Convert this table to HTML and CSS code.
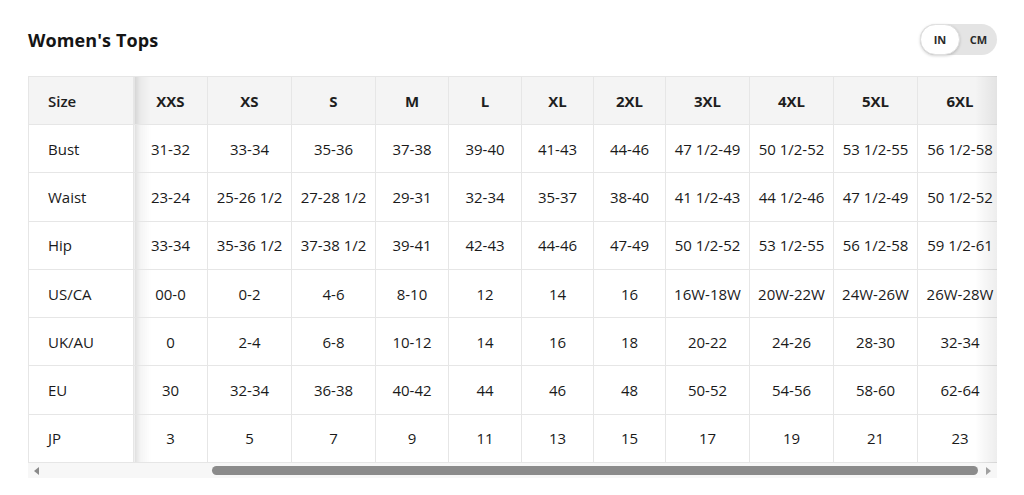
FILE: index.html
```html
<!DOCTYPE html>
<html lang="en">
<head>
<meta charset="utf-8">
<title>Women's Tops</title>
<link rel="stylesheet" href="styles.css">
</head>
<body>
<div class="page">
  <div class="top">
    <h2 class="title">Women's Tops</h2>
    <div class="toggle">
      <span class="opt active">IN</span>
      <span class="opt">CM</span>
    </div>
  </div>
  <div class="chart">
    <div class="scroller">
      <table class="sizes">
        <colgroup>
          <col class="c-first"><col class="c74"><col class="c84"><col class="c84"><col class="c73"><col class="c73"><col class="c72"><col class="c72"><col class="c84"><col class="c84"><col class="c84"><col class="c85">
        </colgroup>
        <thead>
          <tr><th class="first">Size</th><th class="shade">XXS</th><th>XS</th><th>S</th><th>M</th><th>L</th><th>XL</th><th>2XL</th><th>3XL</th><th>4XL</th><th>5XL</th><th>6XL</th></tr>
        </thead>
        <tbody>
          <tr><td class="first">Bust</td><td class="shade">31-32</td><td>33-34</td><td>35-36</td><td>37-38</td><td>39-40</td><td>41-43</td><td>44-46</td><td>47 1/2-49</td><td>50 1/2-52</td><td>53 1/2-55</td><td>56 1/2-58</td></tr>
          <tr><td class="first">Waist</td><td class="shade">23-24</td><td>25-26 1/2</td><td>27-28 1/2</td><td>29-31</td><td>32-34</td><td>35-37</td><td>38-40</td><td>41 1/2-43</td><td>44 1/2-46</td><td>47 1/2-49</td><td>50 1/2-52</td></tr>
          <tr><td class="first">Hip</td><td class="shade">33-34</td><td>35-36 1/2</td><td>37-38 1/2</td><td>39-41</td><td>42-43</td><td>44-46</td><td>47-49</td><td>50 1/2-52</td><td>53 1/2-55</td><td>56 1/2-58</td><td>59 1/2-61</td></tr>
          <tr><td class="first">US/CA</td><td class="shade">00-0</td><td>0-2</td><td>4-6</td><td>8-10</td><td>12</td><td>14</td><td>16</td><td>16W-18W</td><td>20W-22W</td><td>24W-26W</td><td>26W-28W</td></tr>
          <tr><td class="first">UK/AU</td><td class="shade">0</td><td>2-4</td><td>6-8</td><td>10-12</td><td>14</td><td>16</td><td>18</td><td>20-22</td><td>24-26</td><td>28-30</td><td>32-34</td></tr>
          <tr><td class="first">EU</td><td class="shade">30</td><td>32-34</td><td>36-38</td><td>40-42</td><td>44</td><td>46</td><td>48</td><td>50-52</td><td>54-56</td><td>58-60</td><td>62-64</td></tr>
          <tr><td class="first">JP</td><td class="shade">3</td><td>5</td><td>7</td><td>9</td><td>11</td><td>13</td><td>15</td><td>17</td><td>19</td><td>21</td><td>23</td></tr>
        </tbody>
      </table>
    </div>
    <div class="scrollbar">
      <span class="arrow left"></span>
      <div class="track"><div class="thumb"></div></div>
      <span class="arrow right"></span>
    </div>
  </div>
</div>
</body>
</html>
```
FILE: styles.css
```css
html, body {
  margin: 0;
  padding: 0;
  background: #ffffff;
}
body {
  font-family: "Open Sans", "Liberation Sans", sans-serif;
  color: #1e1e1e;
}
.page {
  width: 968px;
  padding: 23px 28px 0 28px;
}
.top {
  display: flex;
  align-items: center;
  justify-content: space-between;
  height: 33px;
  margin-bottom: 20px;
}
.title {
  margin: 0;
  font-size: 18px;
  font-weight: 700;
  letter-spacing: 0.1px;
  color: #151515;
}
.toggle {
  display: flex;
  align-items: center;
  width: 77px;
  height: 31px;
  box-sizing: border-box;
  border-radius: 16px;
  background: #e4e4e4;
  margin-right: -1px;
}
.opt {
  display: flex;
  align-items: center;
  justify-content: center;
  height: 31px;
  font-size: 11px;
  font-weight: 700;
  color: #2a2a2a;
}
.opt.active {
  width: 40px;
  background: #ffffff;
  border-radius: 16px;
  box-shadow: 0 1px 3px rgba(0,0,0,0.18);
  box-sizing: border-box;
  border: 1px solid #e0e0e0;
}
.opt:not(.active) {
  flex: 1;
}
.chart {
  position: relative;
  width: 969px;
}
.scroller {
  position: relative;
  width: 969px;
  overflow: hidden;
}
.scroller::after {
  content: "";
  position: absolute;
  top: 0;
  right: 0;
  bottom: 0;
  width: 22px;
  background: linear-gradient(to left, rgba(0,0,0,0.07), rgba(0,0,0,0));
}
.sizes {
  border-collapse: collapse;
  table-layout: fixed;
  width: 974px;
  font-size: 15px;
}
.c-first { width: 105px; }
.c72 { width: 72px; }
.c73 { width: 73px; }
.c74 { width: 74px; }
.c84 { width: 84px; }
.c85 { width: 85px; }
.sizes th, .sizes td {
  border: 1px solid #e6e6e6;
  height: 48.3px;
  padding: 0;
  text-align: center;
  white-space: nowrap;
  box-sizing: border-box;
}
.sizes thead th {
  background-color: #f4f4f4;
  font-weight: 700;
  height: 48px;
}
.sizes td {
  background-color: #ffffff;
  font-weight: 500;
  color: #1a1a1a;
}
.sizes .first {
  text-align: left;
  padding-left: 19px;
}
.sizes thead .first { font-weight: 600; }
.sizes .shade {
  background-image: linear-gradient(to right, rgba(0,0,0,0.13), rgba(0,0,0,0.04) 6px, rgba(0,0,0,0) 16px);
  border-left-color: #d8d8d8;
}
.scrollbar {
  display: flex;
  align-items: center;
  height: 15px;
  background: #f7f7f7;
  width: 969px;
  box-sizing: border-box;
  padding: 0 6px 0 6px;
}
.arrow {
  width: 0;
  height: 0;
  border-top: 4px solid transparent;
  border-bottom: 4px solid transparent;
}
.arrow.left { border-right: 5px solid #8a8a8a; }
.arrow.right { border-left: 5px solid #a0a0a0; }
.track {
  flex: 1;
  height: 9px;
  padding: 0 8px 0 173px;
}
.thumb {
  height: 9px;
  border-radius: 5px;
  background: #8b8b8b;
}
```
